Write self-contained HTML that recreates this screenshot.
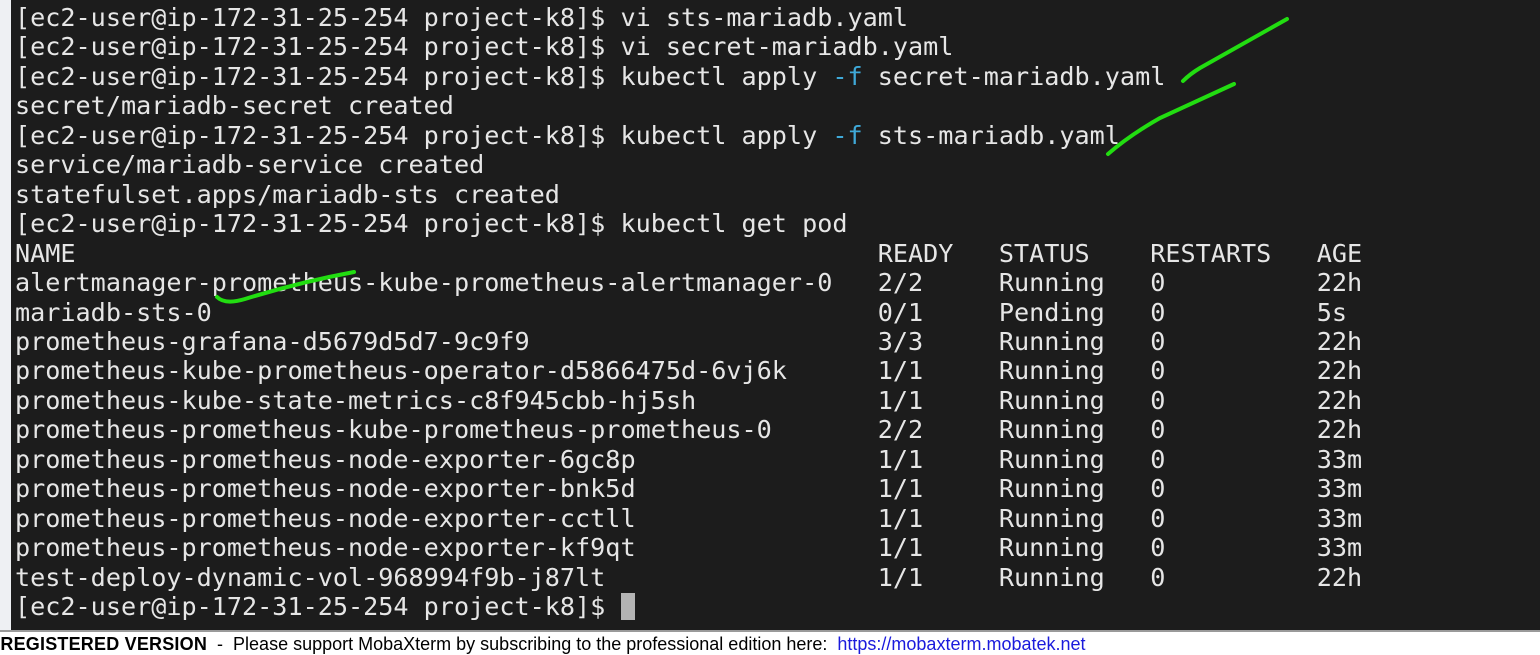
<!DOCTYPE html>
<html><head><meta charset="utf-8"><style>
html,body{margin:0;padding:0;width:1540px;height:655px;overflow:hidden;background:#fff;position:relative}
#strip{position:absolute;left:0;top:0;width:11px;height:630px;background:#eef0f3;border-right:1px solid #ccc}
#term{position:absolute;left:11px;top:0;width:1529px;height:630px;background:#1c1c1c;overflow:hidden}
pre{margin:0;position:absolute;left:4px;top:3px;font-family:"DejaVu Sans Mono","Liberation Mono",monospace;font-size:25.15px;line-height:29.45px;color:#e6e6e6;white-space:pre}
.c{color:#3fa9d8}
#cur{position:absolute;left:610px;top:593px;width:14px;height:27px;background:#b4b4b4}
#bar{position:absolute;left:0;top:630px;width:1540px;height:25px;background:#fff;border-top:2px solid #9a9a9a;box-sizing:border-box;font-family:"Liberation Sans",sans-serif;font-size:18px;line-height:22px;white-space:pre;color:#000}
#bar span.t{position:absolute;left:-26px;top:1px}
b{font-weight:bold;letter-spacing:0.2px}
a{color:#1a1adc;text-decoration:none}
</style></head><body>
<div id="strip"></div>
<div id="term">
<pre>[ec2-user@ip-172-31-25-254 project-k8]$ vi sts-mariadb.yaml
[ec2-user@ip-172-31-25-254 project-k8]$ vi secret-mariadb.yaml
[ec2-user@ip-172-31-25-254 project-k8]$ kubectl apply <span class="c">-f</span> secret-mariadb.yaml
secret/mariadb-secret created
[ec2-user@ip-172-31-25-254 project-k8]$ kubectl apply <span class="c">-f</span> sts-mariadb.yaml
service/mariadb-service created
statefulset.apps/mariadb-sts created
[ec2-user@ip-172-31-25-254 project-k8]$ kubectl get pod
NAME                                                     READY   STATUS    RESTARTS   AGE
alertmanager-prometheus-kube-prometheus-alertmanager-0   2/2     Running   0          22h
mariadb-sts-0                                            0/1     Pending   0          5s
prometheus-grafana-d5679d5d7-9c9f9                       3/3     Running   0          22h
prometheus-kube-prometheus-operator-d5866475d-6vj6k      1/1     Running   0          22h
prometheus-kube-state-metrics-c8f945cbb-hj5sh            1/1     Running   0          22h
prometheus-prometheus-kube-prometheus-prometheus-0       2/2     Running   0          22h
prometheus-prometheus-node-exporter-6gc8p                1/1     Running   0          33m
prometheus-prometheus-node-exporter-bnk5d                1/1     Running   0          33m
prometheus-prometheus-node-exporter-cctll                1/1     Running   0          33m
prometheus-prometheus-node-exporter-kf9qt                1/1     Running   0          33m
test-deploy-dynamic-vol-968994f9b-j87lt                  1/1     Running   0          22h
[ec2-user@ip-172-31-25-254 project-k8]$ </pre>
<div id="cur"></div>
</div>
<svg style="position:absolute;left:0;top:0" width="1540" height="630">
<g fill="none" stroke="#22dd11" stroke-width="4" stroke-linecap="round">
<path d="M1183 81 Q1190 74 1200 68 L1287 19"/>
<path d="M1108 154 Q1130 135 1160 118 L1234 84"/>
<path d="M217 297 Q225 305 245 299 Q300 282 354 272"/>
</g>
</svg>
<div id="bar"><span class="t"><b>UNREGISTERED VERSION</b>  -  Please support MobaXterm by subscribing to the professional edition here:  <a>https://mobaxterm.mobatek.net</a></span></div>
</body></html>
